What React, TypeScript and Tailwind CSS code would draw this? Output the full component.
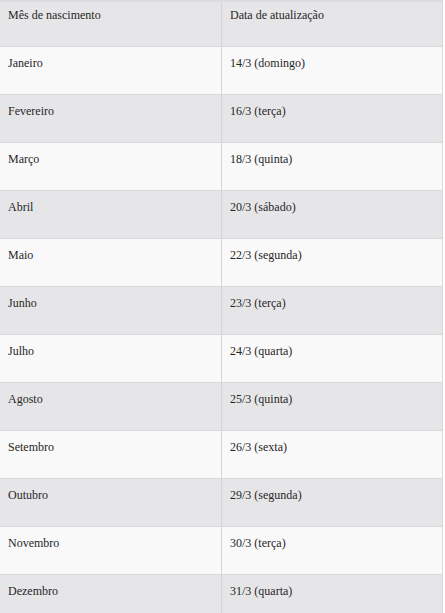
const rows: [string, string][] = [
  ["Janeiro", "14/3 (domingo)"],
  ["Fevereiro", "16/3 (terça)"],
  ["Março", "18/3 (quinta)"],
  ["Abril", "20/3 (sábado)"],
  ["Maio", "22/3 (segunda)"],
  ["Junho", "23/3 (terça)"],
  ["Julho", "24/3 (quarta)"],
  ["Agosto", "25/3 (quinta)"],
  ["Setembro", "26/3 (sexta)"],
  ["Outubro", "29/3 (segunda)"],
  ["Novembro", "30/3 (terça)"],
  ["Dezembro", "31/3 (quarta)"],
];

export default function App() {
  return (
    <div className="w-[445px] h-[613px] overflow-hidden bg-white font-['Liberation_Serif',serif] text-[12px] text-[#262626]">
      <div className="w-[443px] border-r border-[#d9d9db]">
        <div className="grid grid-cols-[222px_1fr] h-[47px] bg-[#e6e6e8] border-t-2 border-t-[#dcdcde] border-b border-b-[#d9d9db]">
          <div className="pl-2 pt-[4px] border-r border-[#d4d4d6]">Mês de nascimento</div>
          <div className="pl-2 pt-[4px]">Data de atualização</div>
        </div>
        {rows.map(([month, date], i) => (
          <div
            key={month}
            className={`grid grid-cols-[222px_1fr] h-[48px] border-b border-[#d9d9db] ${
              i % 2 === 0 ? "bg-[#f9f9f9]" : "bg-[#e6e6e8]"
            }`}
          >
            <div className="pl-2 pt-[7px] border-r border-[#d4d4d6]">{month}</div>
            <div className="pl-2 pt-[7px]">{date}</div>
          </div>
        ))}
      </div>
    </div>
  );
}
